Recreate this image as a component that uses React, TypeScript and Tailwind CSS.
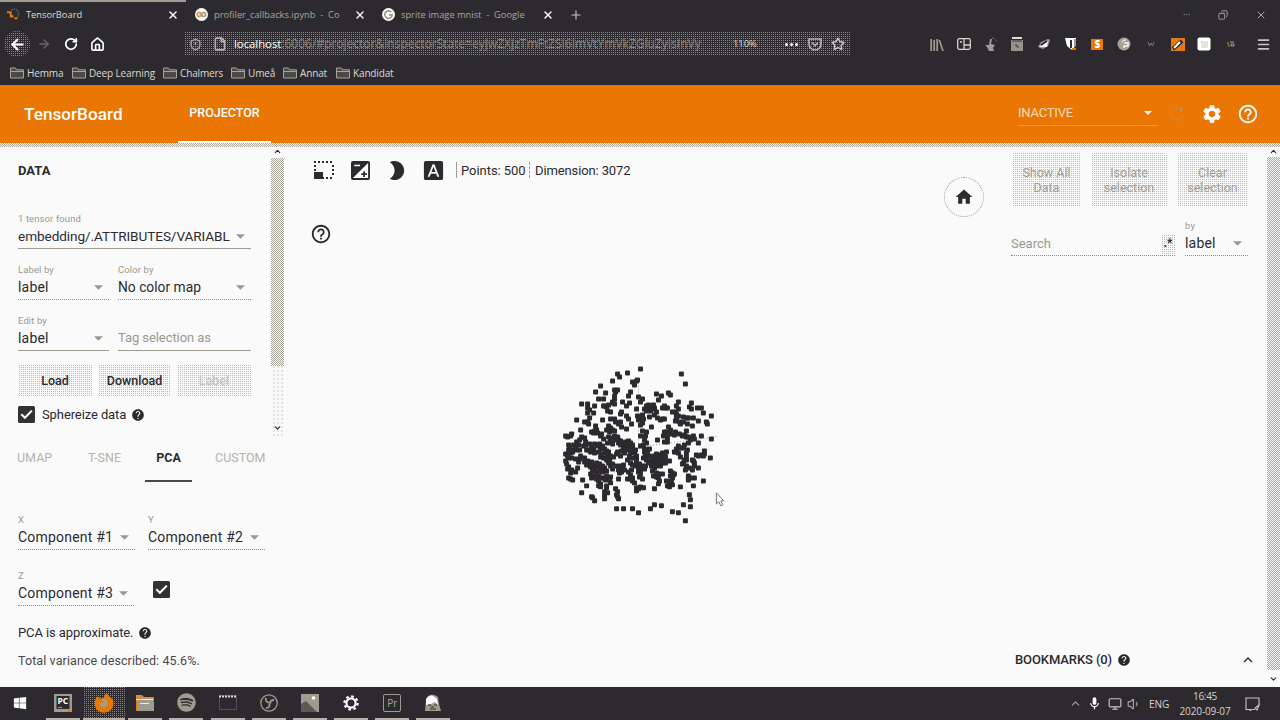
import type { ReactNode } from "react";
import {
  MdBrightness2,
  MdFontDownload,
  MdHelpOutline,
  MdHelp,
  MdHome,
  MdSettings,
  MdExpandLess,
  MdMic,
} from "react-icons/md";
import { FaFirefoxBrowser, FaSpotify, FaWindows } from "react-icons/fa";
import {
  ArrowLeft,
  ArrowRight,
  RotateCw,
  House,
  X,
  Plus,
  Star,
  File,
  ShieldAlert,
  ChevronUp,
  ChevronDown,
  Menu,
  Monitor,
  Volume1,
  Copy,
} from "lucide-react";

const POINTS =
  "272,39 232,52 203,54 207,63 187,75 152,90 137,109 165,113 145,129 160,129 394,56 407,84 247,78 262,72 253,88 258,75 " +
  "192,102 202,102 197,108 192,120 194,130 188,138 194,146 242,110 235,120 217,139 239,142 230,150 264,124 277,130 272,138 258,160 " +
  "320,115 334,120 326,132 354,112 360,118 384,138 424,142 418,155 424,160 443,158 454,158 461,173 483,180 413,186 415,188 431,188 446,196 468,200 472,204 412,204 427,210 " +
  "95,145 113,146 112,158 118,162 112,172 133,150 130,171 160,152 168,155 172,165 180,170 162,150 176,148 186,142 282,160 288,150 295,158 302,152 310,148 312,158 302,166 309,160 318,170 288,165 296,148 " +
  "336,158 346,158 352,156 342,150 378,150 384,160 376,170 368,168 380,176 386,180 399,183 380,188 376,196 388,200 392,206 400,200 298,183 314,178 322,188 338,190 330,194 342,190 " +
  "78,194 103,200 112,198 118,188 114,205 157,192 180,191 193,190 197,198 210,175 213,170 230,182 234,190 205,205 212,200 214,214 228,220 245,205 274,184 262,182 266,194 278,178 280,190 276,202 270,208 304,213 " +
  "90,223 45,241 52,243 60,240 65,234 124,230 132,225 140,222 130,232 142,232 150,240 154,236 137,212 175,210 180,218 170,222 178,228 186,222 192,226 161,251 " +
  "276,226 288,228 272,240 286,242 284,254 288,262 280,268 272,272 321,252 339,240 350,228 360,222 354,215 342,228 346,238 352,248 342,258 353,258 362,236 376,228 372,238 388,234 396,242 404,238 410,244 408,226 416,244 424,248 434,250 430,240 454,240 446,261 483,249 420,254 414,262 404,268 400,276 390,276 384,270 378,280 " +
  "94,244 88,252 80,260 70,268 76,272 84,268 102,248 107,258 106,268 100,272 55,268 58,276 54,284 62,284 68,282 60,293 52,302 46,296 66,290 88,282 78,284 55,307 64,308 " +
  "118,266 124,274 134,266 130,280 116,284 108,282 122,290 134,292 142,272 148,264 152,280 158,272 164,280 146,290 154,296 166,292 170,285 176,290 172,300 160,306 180,302 178,312 150,304 168,314 190,304 200,296 202,288 210,300 " +
  "176,244 184,248 192,242 202,244 206,252 196,254 182,256 172,262 188,264 204,262 212,256 218,264 226,258 236,256 230,268 220,274 212,268 228,280 238,272 246,278 240,288 232,284 252,292 258,300 248,306 238,302 224,292 214,286 256,283 246,268 240,262 260,310 222,280 " +
  "48,324 47,316 56,334 52,340 64,343 62,351 75,349 82,338 84,320 76,310 88,310 92,302 104,308 104,320 112,316 116,326 124,320 130,330 138,322 122,334 108,328 134,338 142,334 148,326 152,336 158,330 164,336 150,346 158,350 168,346 140,350 126,346 120,354 130,360 124,368 138,370 146,362 154,368 144,376 160,366 166,372 170,362 182,364 178,374 182,382 150,386 144,390 152,394 168,392 " +
  "54,368 60,370 67,372 97,372 110,392 95,413 125,424 132,437 127,428 170,398 164,408 162,420 164,430 172,412 197,400 202,408 200,418 204,430 203,424 205,370 180,332 174,322 186,326 188,340 " +
  "198,330 210,330 220,328 216,338 206,342 208,352 214,348 224,342 232,312 240,322 248,328 256,332 264,338 272,342 282,340 276,330 286,332 268,326 258,320 244,342 236,348 242,358 248,366 240,370 232,371 246,376 253,383 260,396 266,400 258,407 272,395 280,398 264,350 270,354 268,365 276,370 " +
  "284,280 292,282 298,280 282,290 292,294 298,300 286,302 280,308 288,314 294,322 300,316 308,310 316,318 310,326 304,330 318,328 326,322 332,314 326,306 334,302 340,310 346,304 344,316 338,322 330,330 322,314 336,292 342,296 348,290 328,298 320,294 318,302 358,317 346,322 312,302 320,330 " +
  "312,336 308,346 318,352 310,360 320,364 326,356 336,355 326,368 328,376 325,384 312,400 350,376 358,384 352,392 364,376 360,360 366,352 372,354 362,346 370,358 366,366 368,388 358,394 392,394 " +
  "378,290 384,292 374,288 392,303 402,312 412,284 410,292 408,303 410,312 400,322 408,330 406,344 396,326 418,336 427,342 432,332 430,316 434,322 446,336 428,314 438,298 446,300 454,298 464,286 464,294 460,300 481,306 " +
  "416,360 414,374 422,368 432,366 430,392 460,377 418,417 421,434 422,454 400,448 198,459 220,459 248,460 266,473 301,459 312,448 335,450 368,468 384,472 405,497 414,366";

const CHECKER =
  "bg-[repeating-conic-gradient(#a8a49a_0_25%,transparent_0_50%)] bg-[length:2px_2px]";
const DOTS =
  "bg-[conic-gradient(#bdbab2_25%,transparent_0)] bg-[length:2px_2px]";
const DOTS_LIGHT =
  "bg-[conic-gradient(#e4e2de_25%,transparent_0)] bg-[length:4px_4px]";
const DOTS_DARK =
  "bg-[conic-gradient(#8b877f_25%,transparent_0)] bg-[length:2px_2px]";

function Caret() {
  return (
    <svg viewBox="0 0 8 4" className="h-[5px] w-[9px] shrink-0 fill-[#9c988f]">
      <path d="M0 0h8L4 4z" />
    </svg>
  );
}

function Field({
  label,
  value,
  width,
  caret = true,
  dotted = false,
  text = "text-[14px] tracking-[0.2px] text-[#2c2a2e]",
}: {
  label: string;
  value: string;
  width: string;
  caret?: boolean;
  dotted?: boolean;
  text?: string;
}) {
  return (
    <div
      className={`flex h-9 flex-col border-b ${width} ${
        dotted ? "border-dotted border-[#918d84]" : "border-[#a09b90]"
      }`}
    >
      <div className="h-3 text-[9.5px] leading-3 tracking-[0.1px] text-[#9c988f]">
        {label}
      </div>
      <div className="flex h-[23px] items-center justify-between pr-[6px] pb-px">
        <span className={`whitespace-nowrap leading-[22px] ${text}`}>{value}</span>
        {caret && <Caret />}
      </div>
    </div>
  );
}

function Checkbox() {
  return (
    <svg viewBox="0 0 17 17" className="size-[17px] shrink-0">
      <rect width="17" height="17" rx="1.5" fill="#333134" />
      <path d="M3.3 8.2l3.6 3.6 7-7.2" fill="none" stroke="#fff" strokeWidth="2" />
    </svg>
  );
}

function BrowserTab({ icon, title, width, active = false }: { icon: ReactNode; title: string; width: string; active?: boolean }) {
  return (
    <div className={`flex h-full items-center pl-[7px] ${width} ${active ? "text-[#dedbd5]" : "text-[#aaa69c]"}`}>
      <span className="mr-[6px] flex w-[13px] shrink-0 justify-center">{icon}</span>
      <span className="flex-1 whitespace-pre text-[9.3px] leading-4">{title}</span>
      <X className="mr-[9px] size-3 text-white" strokeWidth={2.8} />
    </div>
  );
}

function Folder({ name, width }: { name: string; width: string }) {
  return (
    <div className={`flex items-center gap-[3px] ${width}`}>
      <svg viewBox="0 0 14 12" className="h-3 w-[14px] shrink-0" fill="#4b4946" stroke="#a8a49a" strokeWidth="1">
        <path d="M.5 1h5l1 1.800h7V11H.5zM.5 4.500h13" />
      </svg>
      <span className="whitespace-nowrap text-[10px] leading-4 tracking-[-0.15px] text-[#dcd9d3]">{name}</span>
    </div>
  );
}

function Extensions() {
  const cell = "flex w-[26.7px] shrink-0 justify-center";
  return (
    <div className="flex items-center">
      <span className={cell}>
        <svg viewBox="0 0 14 13" className="h-[13px] w-[14px]" stroke="#a09b90" strokeWidth="1.7">
          <path d="M1.2 1v12M4.2 2v11M7.2 1v12M9.3 2l3.7 11" />
        </svg>
      </span>
      <span className={cell}>
        <svg viewBox="0 0 14 12" className="h-3 w-[14px]" fill="none" stroke="#d7d4ce" strokeWidth="1.3">
          <rect x=".7" y=".7" width="12.6" height="10.6" rx="1.5" />
          <path d="M7 1v10M3 4h2M7 7h6" />
        </svg>
      </span>
      <span className={cell}>
        <svg viewBox="0 0 14 14" className="size-[14px]">
          <path d="M6 2h2l-1 5 4 1-2 3 1 3H5L3 10 1 8h4z" fill="#a09b90" />
          <path d="M8 1q4 0 5 5" fill="none" stroke="#a09b90" strokeDasharray="1 1.500" />
        </svg>
      </span>
      <span className={cell}>
        <svg viewBox="0 0 14 14" className="size-[14px]">
          <path d="M1 3h12v11H1z" fill="#97938a" />
          <path d="M2 0h10v2H2z" fill="#dedbd5" />
          <path d="M2 4h10M5 8h2v2h2" fill="none" stroke="#353336" />
        </svg>
      </span>
      <span className={cell}>
        <svg viewBox="0 0 14 12" className="h-3 w-[14px]">
          <path d="M1 9l3-5 7-3 2 1-2 6-5 3z" fill="#a09b90" />
          <path d="M2 9l9-6-1 6z" fill="#fff" />
          <path d="M4 7l6-4" stroke="#2c2a2e" strokeWidth="1.800" />
        </svg>
      </span>
      <span className={cell}>
        <svg viewBox="0 0 14 14" className="size-[14px]">
          <path d="M1 1h11v7l-4 5-5-4z" fill="#fff" />
          <path d="M6 3h2v8H6z" fill="#2c2a2e" />
          <path d="M10 2h2v7h-2z" fill="#a09b90" />
          <path d="M8 11h4v2H8z" fill="#ea7603" />
        </svg>
      </span>
      <span className={cell}>
        <span className="flex h-[11px] w-3 items-center justify-center bg-[#ea7603] text-[10px] font-black leading-none text-white">
          S
        </span>
      </span>
      <span className={cell}>
        <svg viewBox="0 0 14 14" className="size-[14px]">
          <circle cx="7" cy="7" r="6.500" fill="#a5a197" />
          <path d="M5 5l3-2v3h3v3H7v2" fill="none" stroke="#f4f2ef" strokeWidth="1.500" />
          <path d="M6 5l3-1" stroke="#ea7603" />
        </svg>
      </span>
      <span className={cell}>
        <svg viewBox="0 0 8 6" className="h-[6px] w-2" fill="none" stroke="#7d7972">
          <path d="M1 1l1.500 4L4 2l1.500 3L7 1" />
        </svg>
      </span>
      <span className={cell}>
        <svg viewBox="0 0 14 13" className="h-[13px] w-[14px]">
          <path d="M0 0h14v13H0z" fill="#e07a1a" />
          <path d="M2 11l9-8" stroke="#2c2a2e" strokeWidth="4" />
          <path d="M3 10l6-6" stroke="#fff" strokeWidth="2" />
        </svg>
      </span>
      <span className={cell}>
        <svg viewBox="0 0 14 14" className="size-[14px]">
          <rect x=".5" y=".5" width="13" height="13" rx="2" fill="#fff" />
          <path d="M4 4h7v7H4z" fill="#e6e4df" />
        </svg>
      </span>
      <span className={cell}>
        <svg viewBox="0 0 8 6" className="h-[6px] w-2" fill="none" stroke="#a09b90">
          <path d="M1 1v3M3 1h4M4 3h3v2H4z" />
          <path d="M1 5h2" stroke="#ea7603" />
        </svg>
      </span>
    </div>
  );
}

function Browser() {
  return (
    <div className="flex h-[85px] flex-col bg-[#2c2a2e] font-['Open_Sans','Noto_Sans',sans-serif]">
      <div className="flex h-[2px]">
        <div className="w-[186px] bg-[#a09b90]" />
      </div>
      <div className="flex h-[26px] items-center pb-px">
        <BrowserTab
          active
          width="w-[188px]"
          title="TensorBoard"
          icon={
            <svg viewBox="0 0 14 14" className="size-[13px]">
              <path d="M0 4.500h5M4 4v5M3 9h4M8 11h3" stroke="#ea7603" strokeWidth="2.200" fill="none" />
              <path d="M5 2l3-1 4 2v5l-1 3" stroke="#8b877f" strokeDasharray="1.500 1" fill="none" />
            </svg>
          }
        />
        <BrowserTab
          width="w-[187px]"
          title="profiler_callbacks.ipynb  -  Co"
          icon={
            <svg viewBox="0 0 14 14" className="size-[13px]">
              <circle cx="7" cy="7" r="7" fill="#fff" />
              <circle cx="4.500" cy="7" r="2.200" fill="#d9d6d0" stroke="#d98b3e" strokeWidth="1.400" />
              <circle cx="9.500" cy="7" r="2.200" fill="#d9d6d0" stroke="#b0957a" strokeWidth="1.400" />
            </svg>
          }
        />
        <BrowserTab
          width="w-[188px]"
          title="sprite image mnist  -  Google"
          icon={
            <svg viewBox="0 0 14 14" className="size-[13px]">
              <circle cx="7" cy="7" r="7" fill="#fff" />
              <path d="M10 4.400A4 4 0 1 0 11 7.400H7.400" fill="none" stroke="#a09b90" strokeWidth="1.900" />
            </svg>
          }
        />
        <Plus className="ml-[6px] size-[14px] text-[#c9c6bf]" strokeWidth={2} />
        <div className="ml-auto flex items-center text-[#aaa69c]">
          <span className="w-[35px] text-[9px] leading-3">···</span>
          <Copy className="mr-[27px] size-[10px] -scale-x-100" strokeWidth={2.2} />
          <X className="mr-[13px] size-3" strokeWidth={2} />
        </div>
      </div>
      <div className="flex h-8 items-center">
        <span className={`ml-1 flex size-[26px] items-center justify-center rounded-full ${DOTS_DARK}`}>
          <ArrowLeft className="size-[17px] text-white" strokeWidth={3} />
        </span>
        <ArrowRight className="ml-[7px] size-[14px] text-[#6a6761]" strokeWidth={2.4} />
        <RotateCw className="ml-[13px] size-[14px] text-white" strokeWidth={3} />
        <House className="ml-3 size-[15px] text-white" strokeWidth={2.6} />
        <div className={`ml-[79px] flex h-6 w-[666px] items-center ${DOTS_DARK}`}>
          <ShieldAlert className="ml-[5px] size-[13px] shrink-0 text-[#a8a49a]" strokeWidth={2.6} />
          <File className="ml-[11px] size-[14px] shrink-0 text-[#b5b2aa]" strokeWidth={2.8} />
          <div className="ml-[7px] w-[499px] whitespace-nowrap text-[12px] leading-5 text-[#85817a]">
            <span className="text-[11.3px] text-white">localhost</span>
            :6006/#projector&amp;inspectorState=eyJwZXJzTmFtZSI6ImVtYmVkZGluZyIsInVy
          </div>
          <span className="text-[9.5px] leading-3 tracking-[-0.1px] text-[#d7d4ce]">110%</span>
          <span className="ml-auto flex gap-[2px]">
            <i className="size-[3px] rounded-full bg-white" />
            <i className="size-[3px] rounded-full bg-white" />
            <i className="size-[3px] rounded-full bg-white" />
          </span>
          <svg viewBox="0 0 14 13" className="ml-[10px] h-[13px] w-[14px]" fill="none" stroke="#b5b2aa" strokeWidth="1.700">
            <path d="M1 1h12v5a6 6 0 0 1-12 0zM4 4.500l3 3 3-3" />
          </svg>
          <Star className="mr-[5px] ml-[9px] size-[14px] text-[#c9c6bf]" strokeWidth={2.6} />
        </div>
        <div className="ml-[74px]">
          <Extensions />
        </div>
        <Menu className="mr-[9px] ml-auto size-[15px] text-[#c9c6bf]" strokeWidth={2.6} />
      </div>
      <div className="flex h-[25px] items-center pl-[10px]">
        <Folder name="Hemma" width="w-[62px]" />
        <Folder name="Deep Learning" width="w-[91px]" />
        <Folder name="Chalmers" width="w-[68px]" />
        <Folder name="Umeå" width="w-[52px]" />
        <Folder name="Annat" width="w-[53px]" />
        <Folder name="Kandidat" width="w-[70px]" />
      </div>
    </div>
  );
}

function Header() {
  return (
    <header className="flex h-[58px] items-center bg-[#ea7603] pl-6 text-white">
      <h1 className="w-[154px] text-[17.2px] font-medium leading-6">TensorBoard</h1>
      <div className="flex h-full w-[93px] items-center justify-center border-b-2 border-white text-[12.5px] font-medium">
        PROJECTOR
      </div>
      <div className="ml-auto flex h-[23px] w-[140px] items-center justify-between border-b border-[#c7a06f] pr-[6px] pb-[1px]">
        <span className="text-[13px] leading-5 tracking-[-0.2px] text-[#f7dcbc]">INACTIVE</span>
        <svg viewBox="0 0 8 4" className="h-1 w-2 fill-white">
          <path d="M0 0h8L4 4z" />
        </svg>
      </div>
      <svg viewBox="0 0 16 16" className="ml-[11px] size-4" fill="none" stroke="#b9a285">
        <path d="M13 5a6 6 0 1 0 .8 4M13 2v3h-3" strokeDasharray="1 1" />
      </svg>
      <MdSettings className="ml-[16px] size-[22px]" />
      <MdHelpOutline className="mr-[21px] ml-[14px] size-[22px]" />
    </header>
  );
}

function LeftPanel() {
  const btn = `flex h-8 items-center justify-center rounded-[2px] text-[12.5px] font-medium ${DOTS}`;
  return (
    <aside className="flex w-[285px] shrink-0 flex-col">
      <div className="flex h-[289px]">
        <div className="w-[270px] pt-[16px] pl-[18px]">
          <h2 className="text-[13px] font-bold leading-4">DATA</h2>
          <div className="mt-[34px]">
            <Field
              label="1 tensor found"
              value="embedding/.ATTRIBUTES/VARIABL"
              width="w-[233px]"
              text="text-[13.6px] tracking-[-0.08px] text-[#2c2a2e]"
            />
          </div>
          <div className="mt-[15px] flex gap-[9px]">
            <Field label="Label by" value="label" width="w-[91px]" dotted />
            <Field label="Color by" value="No color map" width="w-[133px]" text="text-[13.8px] text-[#2c2a2e]" dotted />
          </div>
          <div className="mt-[15px] flex gap-[9px]">
            <Field label="Edit by" value="label" width="w-[91px]" />
            <Field
              label=""
              value="Tag selection as"
              width="w-[133px]"
              caret={false}
              text="text-[13px] tracking-[-0.08px] text-[#9c988f]"
            />
          </div>
          <div className="mt-[14px] flex gap-[6px]">
            <div className={`${btn} w-[74px]`}>Load</div>
            <div className={`${btn} w-[73px]`}>Download</div>
            <div className={`${btn} w-[74px] text-[#c9c6bf]`}>Label</div>
          </div>
          <div className="mt-[8px] flex h-[19px] items-center text-[13px]">
            <Checkbox />
            <span className="ml-[7px] tracking-[-0.1px]">Sphereize data</span>
            <MdHelp className="ml-[5px] size-[14px]" />
          </div>
        </div>
        <div className="flex h-[289px] w-[14px] flex-col items-center">
          <ChevronUp className="mb-[2px] h-[9px] w-[9px]" strokeWidth={3} />
          <div className={`h-[208px] w-[13px] ${CHECKER}`} />
          <div className={`flex h-[70px] w-3 items-end justify-center ${DOTS_LIGHT}`}>
            <ChevronDown className="mb-px h-[14px] w-[9px]" strokeWidth={3} />
          </div>
        </div>
      </div>

      <nav className="flex h-[46px] text-[12.5px] text-[#b5b2aa]">
        <div className="ml-[17px] flex h-[44px] w-[128px] items-center justify-between pr-6">
          <span>UMAP</span>
          <span>T-SNE</span>
        </div>
        <div className="flex h-[46px] w-[47px] items-center justify-center border-b-2 border-[#4a484a] font-bold text-[#2c2a2e]">
          PCA
        </div>
        <div className="ml-[23px] flex h-[44px] items-center">CUSTOM</div>
      </nav>

      <div className="mt-[32px] pl-[18px]">
        <div className="flex gap-[13px]">
          <Field label="X" value="Component #1" width="w-[117px]" dotted />
          <Field label="Y" value="Component #2" width="w-[117px]" dotted />
        </div>
        <div className="mt-5 flex items-start gap-[19px]">
          <Field label="Z" value="Component #3" width="w-[116px]" dotted />
          <div className="pt-[11px]">
            <Checkbox />
          </div>
        </div>
        <div className="mt-[18px] flex h-[18px] items-center text-[13px] tracking-[-0.1px]">
          PCA is approximate.
          <MdHelp className="ml-[5px] size-[14px]" />
        </div>
        <p className="mt-[10px] text-[12.5px] leading-[18px] tracking-[0.1px] text-[#4a484a]">
          Total variance described: 45.6%.
        </p>
      </div>
    </aside>
  );
}

function Scatter() {
  const pts = POINTS.split(" ").map((p) => p.split(",").map(Number));
  return (
    <svg className="absolute inset-0 size-full" viewBox="0 0 715 541">
      <g stroke="#a09b90" strokeDasharray="1 2" fill="none">
        <path d="M353.5 236v66l12-3 68-9M353.5 302l-30 30" />
      </g>
      <g fill="#2c2a2e">
        {pts.map(([x, y], i) => (
          <rect key={i} x={Math.round(x / 3 + 262.5)} y={Math.round(y / 3 + 206.500)} width="5" height="5" rx="1" />
        ))}
      </g>
      <path d="M431.5 346.5v11l2.5-2 2 4 2-1-2-4h3z" fill="#fff" stroke="#77736c" strokeWidth="1" />
    </svg>
  );
}

function Canvas() {
  return (
    <main className="relative flex w-[715px] shrink-0 flex-col">
      <Scatter />
      <div className="relative flex h-[46px] items-center pl-[29px]">
        <svg viewBox="0 0 20 18" className="h-[18px] w-5">
          <path d="M0 1h20M0 17h20M1 4v9M19 4v12" fill="none" stroke="#2c2a2e" strokeWidth="2" strokeDasharray="2 2" />
          <path d="M0 11h9v7H0z" fill="#2c2a2e" />
        </svg>
        <svg viewBox="0 0 20 20" className="ml-[17px] size-[19px]">
          <rect width="20" height="20" rx="2" fill="#2c2a2e" />
          <path d="M18 2v16H2z" fill="#fff" />
          <path d="M3.500 4.700h6" stroke="#fff" strokeWidth="1.600" />
          <path d="M13.800 10.800v6M10.800 13.800h6" stroke="#2c2a2e" strokeWidth="1.800" />
        </svg>
        <MdBrightness2 className="ml-[15px] size-[23px]" />
        <MdFontDownload className="ml-[14px] size-[23px]" />
        <span className="ml-[11px] h-4 w-px bg-[#a09b90]" />
        <span className="ml-[4px] w-[68px] whitespace-nowrap pt-px text-[13px] tracking-[-0.05px]">Points: 500</span>
        <span className="h-4 border-l border-dashed border-[#a09b90]" />
        <span className="ml-[5px] whitespace-nowrap pt-px text-[13px] tracking-[-0.12px]">Dimension: 3072</span>
      </div>
      <div className="relative flex h-[80px] justify-between pr-4 pl-[25px]">
        <MdHelpOutline className="mt-[30px] size-[22px]" />
        <div className="-mt-[16px] flex size-10 items-center justify-center rounded-full border border-dotted border-[#a09b90]">
          <MdHome className="size-[20px]" />
        </div>
      </div>
    </main>
  );
}

function RightPanel() {
  const btn = `flex h-[54px] items-center justify-center rounded-[3px] text-center text-[12.5px] leading-[15px] text-[#a19d94] ${DOTS}`;
  return (
    <aside className="flex min-w-0 flex-1">
      <div className="flex w-[267px] flex-col pl-[11px]">
        <div className="mt-[6px] flex">
          <div className={`${btn} ml-px w-[69px]`}>
            Show All
            <br />
            Data
          </div>
          <div className={`${btn} ml-[10px] w-[76px]`}>
            Isolate
            <br />
            selection
          </div>
          <div className={`${btn} ml-[10px] w-[71px]`}>
            Clear
            <br />
            selection
          </div>
        </div>
        <div className="mt-[13px] flex items-end gap-[10px]">
          <div className="flex h-[22px] w-[164px] items-center justify-between border-b border-dotted border-[#918d84] text-[13px] text-[#9c988f]">
            <span className="pb-[2px]">Search</span>
            <span className={`flex h-5 w-[14px] items-center justify-center pb-1 text-[12px] font-bold text-[#2c2a2e] ${DOTS}`}>
              .*
            </span>
          </div>
          <Field label="by" value="label" width="w-[63px]" dotted />
        </div>
        <div className="mt-auto mb-[18px] flex h-[18px] items-center pl-1">
          <span className="text-[13px] font-medium tracking-[-0.1px]">BOOKMARKS (0)</span>
          <MdHelp className="ml-[5px] size-[14px]" />
          <MdExpandLess className="mr-[10px] ml-auto size-[18px]" />
        </div>
      </div>
      <div className="flex w-[13px] flex-col items-center">
        <ChevronUp className="mb-px h-[9px] w-[9px]" strokeWidth={3} />
        <div className={`w-[13px] flex-1 ${CHECKER}`} />
        <ChevronDown className="mt-[3px] mb-[2px] h-[12px] w-[9px]" strokeWidth={3} />
      </div>
    </aside>
  );
}

function TaskItem({ children, active = false, open = true }: { children: ReactNode; active?: boolean; open?: boolean }) {
  return (
    <div className={`flex h-[33px] w-[41.2px] shrink-0 flex-col items-center ${active ? DOTS_DARK : ""}`}>
      <div className="flex h-[31px] items-center justify-center">{children}</div>
      {open && <div className={`h-[2px] bg-[#b5b2aa] ${active ? "w-full" : "w-[34px]"}`} />}
    </div>
  );
}

function Taskbar() {
  return (
    <footer className="flex h-[33px] items-center bg-[#2c2a2e] pl-px font-['Open_Sans','Noto_Sans',sans-serif] text-[#d7d4ce]">
      <TaskItem open={false}>
        <FaWindows className="mr-[3px] size-[14px] text-white" />
      </TaskItem>
      <TaskItem>
        <svg viewBox="0 0 18 18" className="size-[18px]">
          <path d="M0 0h18v18H0z" fill="#a09b90" />
          <path d="M2.500 2h13v13h-13z" fill="#2c2a2e" />
          <text x="3.500" y="10" fontSize="8.500" fontWeight="700" fill="#fff">PC</text>
          <path d="M4 13.500h4" stroke="#a09b90" />
          <path d="M14 17h3" stroke="#ea7603" strokeWidth="1.500" />
        </svg>
      </TaskItem>
      <TaskItem active>
        <svg viewBox="0 0 20 20" className="size-5">
          <circle cx="10" cy="11" r="6" fill="#a09b90" />
        </svg>
        <FaFirefoxBrowser className="-ml-5 size-5 text-[#ea7603]" />
      </TaskItem>
      <TaskItem>
        <svg viewBox="0 0 18 16" className="h-4 w-[18px]">
          <path d="M0 0h6l2 2h10v4H0z" fill="#d08d48" />
          <path d="M0 4h18v12H0z" fill="#a09b90" />
          <path d="M0 4.500h17M4 8.500h9" stroke="#f2ead9" />
          <path d="M0.500 5v11M17.500 3v4" stroke="#ea7603" />
        </svg>
      </TaskItem>
      <TaskItem>
        <FaSpotify className="size-[19px] text-[#a09b90]" />
      </TaskItem>
      <TaskItem>
        <svg viewBox="0 0 18 15" className="h-[15px] w-[18px]">
          <path d="M.5.500h17v14H.500z" fill="none" stroke="#7d7972" strokeDasharray="1 1" />
          <path d="M0 1.500h18" stroke="#dedbd5" strokeWidth="2" strokeDasharray="2 1" />
        </svg>
      </TaskItem>
      <TaskItem>
        <svg viewBox="0 0 18 18" className="size-[18px]" fill="none" stroke="#a09b90" strokeWidth="1.300">
          <circle cx="9" cy="9" r="8.200" />
          <path d="M6 4q-1 4 3 4.500M14 6q-4 0-4 4M6 14q4 0 3.500-4" strokeWidth="1.800" />
        </svg>
      </TaskItem>
      <TaskItem>
        <svg viewBox="0 0 18 18" className="size-[18px]">
          <path d="M0 0h18v18H0z" fill="#a09b90" />
          <path d="M0 10l5-3 11 11H0z" fill="#5d5a56" />
          <circle cx="12.500" cy="4" r="1.800" fill="#fff" />
        </svg>
      </TaskItem>
      <TaskItem>
        <svg viewBox="0 0 16 16" className="size-4" fill="none" stroke="#fff">
          <circle cx="8" cy="8" r="4.600" strokeWidth="2.200" />
          <circle cx="8" cy="8" r="6.600" strokeWidth="2.200" strokeDasharray="2.590 2.590" />
        </svg>
      </TaskItem>
      <TaskItem>
        <span className="flex size-[18px] items-center justify-center rounded-[2px] border border-[#a09b90] text-[10px] leading-none text-[#a8a49a]">
          Pr
        </span>
      </TaskItem>
      <TaskItem>
        <svg viewBox="0 0 16 18" className="h-[18px] w-4">
          <path d="M2 3q5-5 11 0l1 7 2 7H0l1-11z" fill="#a09b90" />
          <path d="M1 5q5-7 11 0l1 6-3-3-4 2-5 1z" fill="#fff" />
          <path d="M3 11h3M9 11h3M5 15h6M6 13h3" stroke="#2c2a2e" />
          <path d="M3 13h2M11 13h2" stroke="#ea7603" />
        </svg>
      </TaskItem>
      <div className="ml-auto flex items-center">
        <ChevronUp className="size-[13px] text-[#a8a49a]" strokeWidth={2} />
        <MdMic className="ml-[5px] size-[15px] text-white" />
        <Monitor className="ml-[6px] size-[14px] text-[#c9c6bf]" strokeWidth={2} />
        <Volume1 className="ml-[5px] size-[14px] text-[#a8a49a]" strokeWidth={2} />
        <span className="ml-[8px] w-[27px] text-[10px] leading-4 tracking-[-0.1px]">ENG</span>
        <div className="flex w-[58px] flex-col items-center text-[10px] leading-[15px]">
          <span className="tracking-[-0.3px]">16:45</span>
          <span className="tracking-[-0.1px]">2020-09-07</span>
        </div>
        <svg viewBox="0 0 15 14" className="mr-[20px] ml-[11px] h-[14px] w-[15px]" fill="none" stroke="#c9c6bf" strokeWidth="1.100">
          <path d="M10 12.500H7l-2 1v-1H1V1h13v7M14 8l-4 3 2 2z" />
        </svg>
      </div>
    </footer>
  );
}

export default function App() {
  return (
    <div className="flex h-[720px] w-[1280px] flex-col overflow-hidden bg-[#fafafa] font-['Roboto',sans-serif] text-[#2c2a2e]">
      <Browser />
      <Header />
      <div className={`h-[4px] ${CHECKER}`} />
      <div className="flex h-[540px]">
        <LeftPanel />
        <Canvas />
        <RightPanel />
      </div>
      <Taskbar />
    </div>
  );
}
